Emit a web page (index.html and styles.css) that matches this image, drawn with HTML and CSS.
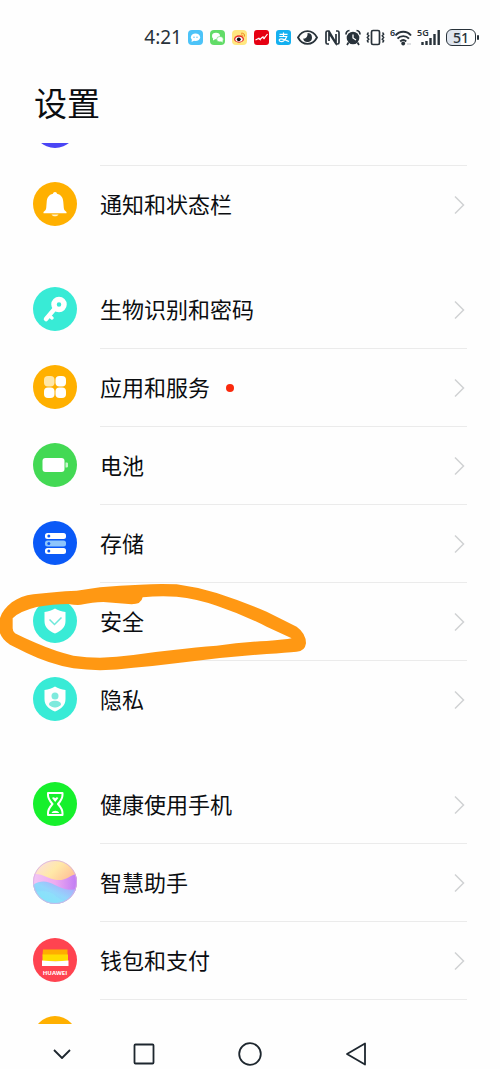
FILE: index.html
```html
<!DOCTYPE html>
<html lang="zh-CN">
<head>
<meta charset="utf-8">
<meta name="viewport" content="width=device-width, initial-scale=1">
<title>设置</title>
<link rel="stylesheet" href="styles.css">
</head>
<body>
<div class="screen">
  <div class="status">
    <time class="clock">4:21</time>
    <div class="apps">
      <svg width="15" height="15" viewBox="0 0 15 15"><rect width="15" height="15" rx="4" fill="#4cc3f8"/><ellipse cx="7.5" cy="7.2" rx="4.6" ry="3.8" fill="#fff"/><path d="M4 9l-.5 3 3-1.4z" fill="#fff"/><circle cx="6" cy="7.2" r=".7" fill="#4cc3f8"/><circle cx="9" cy="7.2" r=".7" fill="#4cc3f8"/></svg>
      <svg width="15" height="15" viewBox="0 0 15 15"><rect width="15" height="15" rx="4" fill="#62dc68"/><ellipse cx="6" cy="6" rx="4" ry="3.3" fill="#fff"/><path d="M3 8v2.500l2.500-1.500z" fill="#fff"/><ellipse cx="10" cy="9.200" rx="3.300" ry="2.700" fill="#fff" stroke="#62dc68" stroke-width=".6"/><path d="M11 11l1.500 1.700V10z" fill="#fff"/></svg>
      <svg width="15" height="15" viewBox="0 0 15 15"><rect width="15" height="15" rx="4" fill="#ffe780"/><ellipse cx="7" cy="9" rx="5" ry="3.700" fill="#e8322c"/><ellipse cx="7" cy="9.300" rx="3.600" ry="2.500" fill="#fff"/><circle cx="6.800" cy="9.300" r="1.900" fill="#111"/><path d="M9.500 3.200c2-.4 3.400 1 3 3M9.500 5c1-.1 1.500.4 1.300 1.300" fill="none" stroke="#f08a24" stroke-linecap="round"/></svg>
      <svg width="15" height="15" viewBox="0 0 15 15"><rect width="15" height="15" rx="3" fill="#e60012"/><path d="M1.500 10l3-1.500 1.500 1 2.500-2.500 1.500 1.500L13.500 4" fill="none" stroke="#fff" stroke-width="1.200"/><path d="M5 7.500l1.500 3M9.500 6l1 3" stroke="#fff" stroke-width=".6"/></svg>
      <svg width="15" height="15" viewBox="0 0 15 15"><rect width="15" height="15" rx="3" fill="#14b0f0"/><path d="M3.500 4.300h8M7.500 2.500V6.500M3.300 6.500h7.400C9.500 9.500 7 12 4.500 11.500c-2-.5-1.700-2.700.5-2.700 2.500 0 4.500 1.700 8 2.700" fill="none" stroke="#fff" stroke-width="1.200"/></svg>
    </div>
    <div class="signals">
      <svg width="23" height="17" viewBox="0 0 23 17"><path d="M1 8.500C5.500 0 15.500 0 20 8.500 15.500 17 5.500 17 1 8.500z" fill="none" stroke="#28323a" stroke-width="1.800"/><path d="M10.500 4a4.500 4.500 0 1 1-4.400 5.500c2 .8 5-1.500 4.400-5.500z" fill="#28323a"/></svg>
      <svg width="15" height="17" viewBox="0 0 15 17"><path d="M4 15H2.500Q1 15 1 13.500v-10Q1 2 2.500 2H4l7 12V5M11 2h1.500Q14 2 14 3.500v10q0 1.500-1.500 1.500H11L4 4v8" fill="none" stroke="#28323a" stroke-width="1.700"/></svg>
      <svg width="16" height="17" viewBox="0 0 16 17"><circle cx="8" cy="9" r="6.300" fill="#28323a"/><path d="M1 5.500A4 4 0 0 1 4.500 1.500M11.500 1.500A4 4 0 0 1 15 5.500M3.500 13.500L2 16M12.500 13.500l1.500 2.500" fill="none" stroke="#28323a" stroke-width="1.700"/><path d="M8 5.500V9l3 2" fill="none" stroke="#fff" stroke-width="1.300"/></svg>
      <svg width="19" height="17" viewBox="0 0 19 17"><rect x="5.500" y="1.500" width="8" height="14" rx="1.500" fill="none" stroke="#28323a" stroke-width="1.700"/><path d="M2.500 3.500l-1.200 1.700 1.500 1.600-1.500 1.700 1.500 1.700-1.500 1.600 1.200 1.700M16.500 3.500l1.200 1.700-1.500 1.600 1.500 1.700-1.500 1.700 1.500 1.600-1.200 1.700" fill="none" stroke="#28323a" stroke-width="1.400"/></svg>
      <svg width="22" height="20" viewBox="0 0 22 20"><text class="tag" x="0" y="9">6</text><path d="M5.500 8.500c4-5 11.500-5 15.500 0M7.500 11.700c3-3.500 8.500-3.500 11.500 0M10.200 14.500c2-2 4-2 6 0" fill="none" stroke="#28323a" stroke-width="1.900"/><circle cx="13.200" cy="16.500" r="1.900" fill="#28323a"/><path d="M17 17h4" stroke="#d2d5d8" stroke-width="1.500"/></svg>
      <svg width="24" height="20" viewBox="0 0 24 20"><text class="tag" x="0" y="9">5G</text><path d="M5.500 18v-3M9.500 18v-4M13.500 18v-7M17.500 18V7M21.700 18V3" stroke="#28323a" stroke-width="2.400"/></svg>
      <div class="battery"><span class="charge">51</span><span class="tip"></span></div>
    </div>
  </div>

  <header class="header"><h1 class="title">设置</h1></header>

  <main class="list">
    <section class="group">
      <div class="row"><svg class="icon" viewBox="0 0 44 44"><circle cx="22" cy="22" r="22" fill="#4a45f5"/></svg></div>
      <a class="row" href="#notifications">
        <svg class="icon" viewBox="0 0 44 44"><circle cx="22" cy="22" r="22" fill="#ffb000"/><path d="M22 10c1.200 0 1.800.8 2 1.700 4.300 1 6 4 6.300 8.300l.5 6c.2 1.800 1 2.700 2.700 4v1.200h-23V30c1.700-1.300 2.500-2.200 2.700-4l.5-6c.3-4.300 2-7.300 6.300-8.300.2-.9.800-1.700 2-1.700z" fill="#fff"/><path d="M18.500 32.500h7c-.8 2.400-6.200 2.400-7 0z" fill="#fff3cf"/></svg>
        <span class="body"><span class="label">通知和状态栏</span><svg class="chevron" viewBox="0 0 12 20"><path d="M2 1.500l8.500 8.500L2 18.500"/></svg></span>
      </a>
    </section>

    <section class="group">
      <a class="row" href="#biometrics">
        <svg class="icon" viewBox="0 0 44 44"><circle cx="22" cy="22" r="22" fill="#38ebd6"/><circle cx="26" cy="17.500" r="5" fill="none" stroke="#fff" stroke-width="5.500"/><path d="M21.500 22L13 32" stroke="#fff" stroke-width="4.500" stroke-linecap="round"/><path d="M16 28.500l3 2.500" stroke="#fff" stroke-width="3.500" stroke-linecap="round"/></svg>
        <span class="body"><span class="label">生物识别和密码</span><svg class="chevron" viewBox="0 0 12 20"><path d="M2 1.500l8.500 8.500L2 18.500"/></svg></span>
      </a>
      <a class="row" href="#apps">
        <svg class="icon" viewBox="0 0 44 44"><circle cx="22" cy="22" r="22" fill="#ffb000"/><rect x="11" y="11" width="10.500" height="10.500" rx="4" fill="#ffe7a8"/><rect x="22.500" y="11" width="10.500" height="10.500" rx="4" fill="#fff"/><rect x="11" y="22.500" width="10.500" height="10.500" rx="4" fill="#fff"/><rect x="22.500" y="22.500" width="10.500" height="10.500" rx="4" fill="#fff"/></svg>
        <span class="body"><span class="label">应用和服务</span><span class="dot"></span><svg class="chevron" viewBox="0 0 12 20"><path d="M2 1.500l8.500 8.500L2 18.500"/></svg></span>
      </a>
      <a class="row" href="#battery">
        <svg class="icon" viewBox="0 0 44 44"><circle cx="22" cy="22" r="22" fill="#43d954"/><rect x="9.500" y="15" width="22" height="14" rx="3" fill="#fff"/><path d="M32.500 19.500c2.500 0 2.500 0 2.500 2.500s0 2.500-2.500 2.500z" fill="#c9f5ce"/></svg>
        <span class="body"><span class="label">电池</span><svg class="chevron" viewBox="0 0 12 20"><path d="M2 1.500l8.500 8.500L2 18.500"/></svg></span>
      </a>
      <a class="row" href="#storage">
        <svg class="icon" viewBox="0 0 44 44"><circle cx="22" cy="22" r="22" fill="#0a59f7"/><rect x="12" y="12" width="21" height="6" rx="2.500" fill="#fff"/><rect x="12" y="19.500" width="21" height="6" rx="2.500" fill="#8ec5fb"/><rect x="12" y="27" width="21" height="6" rx="2.500" fill="#fff"/><circle cx="15.800" cy="15" r="1.500" fill="#0a59f7"/><circle cx="15.800" cy="22.500" r="1.500" fill="#0a59f7"/><circle cx="15.800" cy="30" r="1.500" fill="#0a59f7"/></svg>
        <span class="body"><span class="label">存储</span><svg class="chevron" viewBox="0 0 12 20"><path d="M2 1.500l8.500 8.500L2 18.500"/></svg></span>
      </a>
      <a class="row" href="#security">
        <svg class="icon" viewBox="0 0 44 44"><circle cx="22" cy="22" r="22" fill="#38ebd6"/><path d="M22 9.500c3 2 6.500 3 10.500 3.500v9c0 6-4 10-10.500 12.500C15.500 32 11.500 28 11.500 22v-9c4-.5 7.500-1.500 10.500-3.500z" fill="#fff"/><path d="M16.500 20.500l5 5 7-7" fill="none" stroke="#6fe8da" stroke-width="1.500"/></svg>
        <span class="body"><span class="label">安全</span><svg class="chevron" viewBox="0 0 12 20"><path d="M2 1.500l8.500 8.500L2 18.500"/></svg></span>
        <svg class="marker" viewBox="0 0 960 450"><path fill-rule="evenodd" fill="#ff9813" d="M-4 150C-2 105 40 65 100 58Q160 50 230 47Q265 43 300 37Q360 31 420 29Q480 25 530 28Q590 36 650 54Q730 80 800 110Q850 135 890 155Q918 175 918 205Q915 229 890 230Q860 233 800 237Q670 246 540 263Q470 272 400 278Q350 285 300 286Q260 284 220 280Q150 268 80 234L30 209C5 192-4 175-4 150ZM38 130Q55 110 110 96Q160 87 205 87Q235 93 250 88Q275 82 310 81L395 88Q424 88 428 67Q480 61 530 65Q590 71 650 92Q730 119 800 155L875 190Q855 194 800 198Q720 202 650 212Q590 216 520 225Q460 231 400 240Q350 247 300 248Q260 248 220 242Q170 231 110 205Q70 188 45 175Q38 170 38 160Z"/></svg>
      </a>
      <a class="row" href="#privacy">
        <svg class="icon" viewBox="0 0 44 44"><circle cx="22" cy="22" r="22" fill="#38ebd6"/><path d="M22 9.500c3 2 6.500 3 10.500 3.500v9c0 6-4 10-10.500 12.500C15.500 32 11.500 28 11.500 22v-9c4-.5 7.500-1.500 10.500-3.500z" fill="#fff"/><circle cx="22" cy="19" r="3.500" fill="#7eeadd"/><path d="M16 27.500c0-5 12-5 12 0 0 1.500-4 3-6 3s-6-1.500-6-3z" fill="#7eeadd"/></svg>
        <span class="body"><span class="label">隐私</span><svg class="chevron" viewBox="0 0 12 20"><path d="M2 1.500l8.500 8.500L2 18.500"/></svg></span>
      </a>
    </section>

    <section class="group">
      <a class="row" href="#digital-balance">
        <svg class="icon" viewBox="0 0 44 44"><circle cx="22" cy="22" r="22" fill="#16f02c"/><path d="M15 11h14.500v2c0 4-2 6-4.500 9 2.500 3 4.500 5 4.500 9v2H15v-2c0-4 2-6 4.500-9-2.500-3-4.500-5-4.500-9z" fill="none" stroke="#fff" stroke-width="2" stroke-linejoin="round"/><path d="M19 16c1-1 2.200-.8 3.200.3 1-1.100 2.200-1.300 3.200-.3l-3.200 4zM18.500 31c1.200-3 6.500-3 7.700 0z" fill="#fff"/></svg>
        <span class="body"><span class="label">健康使用手机</span><svg class="chevron" viewBox="0 0 12 20"><path d="M2 1.500l8.500 8.500L2 18.500"/></svg></span>
      </a>
      <a class="row" href="#assistant">
        <svg class="icon" viewBox="0 0 44 44">
          <defs>
            <linearGradient id="sky" x1="0" y1="0" x2="1" y2="1"><stop offset="0" stop-color="#f9dcf0"/><stop offset=".35" stop-color="#ffe9a8"/><stop offset=".6" stop-color="#ffc79a"/></linearGradient>
            <linearGradient id="wave"><stop offset="0" stop-color="#f2c6f4"/><stop offset=".5" stop-color="#eeaaf0"/><stop offset="1" stop-color="#c07cf4"/></linearGradient>
            <linearGradient id="sea" x1="0" y1="1" x2="1" y2="0"><stop offset="0" stop-color="#6fe2f8"/><stop offset=".5" stop-color="#93d6fc"/><stop offset="1" stop-color="#b795fa"/></linearGradient>
            <clipPath id="ball"><circle cx="22" cy="22" r="22"/></clipPath>
          </defs>
          <g clip-path="url(#ball)"><path d="M0 0h44v44H0z" fill="url(#sky)"/><path d="M0 14c10-1 15 5 24 6 9 1 13-5 20-6v30H0z" fill="url(#wave)"/><path d="M0 25c8-5 14-4 22 0 8 4 14 6 22 4v15H0z" fill="url(#sea)"/><path d="M0 33c10-4 18-2 24 4 6 5 12 5 20 2v5H0z" fill="#8eeafa" opacity=".4"/></g><circle cx="22" cy="22" r="21.500" fill="none" stroke="#d5aee6" stroke-width=".8"/>
        </svg>
        <span class="body"><span class="label">智慧助手</span><svg class="chevron" viewBox="0 0 12 20"><path d="M2 1.500l8.500 8.500L2 18.500"/></svg></span>
      </a>
      <a class="row" href="#wallet">
        <svg class="icon" viewBox="0 0 44 44"><circle cx="22" cy="22" r="22" fill="#ff4350"/><path d="M10 11.500h24.500v6H9.500z" fill="#ffad00"/><path d="M9.500 16.500h25.500v7H9.500z" fill="#ffdc00"/><path d="M9 22.500q13.500 1.500 26.500 0V28H9z" fill="#fff"/><text class="brand" x="22" y="37">HUAWEI</text></svg>
        <span class="body"><span class="label">钱包和支付</span><svg class="chevron" viewBox="0 0 12 20"><path d="M2 1.500l8.500 8.500L2 18.500"/></svg></span>
      </a>
      <div class="row"><svg class="icon" viewBox="0 0 44 44"><circle cx="22" cy="22" r="22" fill="#ffb000"/></svg><span class="body"></span></div>
    </section>
  </main>

  <nav class="nav">
    <button class="key key-hide" type="button" aria-label="收起"><svg width="20" height="22" viewBox="0 0 20 22"><path d="M2 7l8 8 8-8"/></svg></button>
    <button class="key" type="button" aria-label="最近任务"><svg width="22" height="22" viewBox="0 0 22 22"><rect x="1.500" y="1.500" width="19" height="19" rx="1"/></svg></button>
    <button class="key" type="button" aria-label="主页"><svg width="24" height="24" viewBox="0 0 24 24"><circle cx="12" cy="12" r="10.800"/></svg></button>
    <button class="key" type="button" aria-label="返回"><svg width="22" height="24" viewBox="0 0 22 24"><path d="M20 1.500v21L2 12z"/></svg></button>
  </nav>
</div>
</body>
</html>
```
FILE: styles.css
```css
* {
  box-sizing: border-box;
}

body {
  margin: 0;
  background: #fefefe;
  color: #0b0d10;
  font-family: "Noto Sans", "Noto Sans CJK SC", sans-serif;
}

svg {
  display: block;
  flex: none;
}

.screen {
  display: flex;
  flex-direction: column;
  height: 100vh;
}

.status {
  display: flex;
  flex: none;
  align-items: center;
  justify-content: flex-end;
  gap: 6px;
  height: 74px;
  padding-right: 21px;
  color: #28323a;
}

.clock {
  font-size: 19px;
  line-height: 24px;
}

.apps {
  display: flex;
  gap: 7px;
}

.signals {
  display: flex;
  align-items: center;
  gap: 5px;
}

.tag {
  font-size: 9px;
  font-weight: 600;
  fill: #28323a;
}

.battery {
  display: flex;
  align-items: center;
  gap: 1px;
}

.charge {
  width: 30px;
  border: 1px solid #28323a;
  border-radius: 6px;
  background: linear-gradient(90deg, #dfe5ee 50%, #fefefe 50%);
  font-size: 14px;
  font-weight: 500;
  line-height: 15px;
  text-align: center;
}

.tip {
  width: 2px;
  height: 5px;
  border-radius: 1px;
  background: #28323a;
}

.header {
  flex: none;
  height: 69px;
  padding: 4px 34px 0;
}

.title {
  margin: 0;
  font-family: "Noto Sans CJK SC", sans-serif;
  font-size: 33px;
  font-weight: 400;
  line-height: 48px;
}

.list {
  flex: 1;
  min-height: 0;
  overflow: hidden;
}

.group {
  margin-bottom: 27px;
}

.group:first-child {
  margin-top: -56px;
}

.row {
  position: relative;
  display: flex;
  align-items: center;
  gap: 23px;
  height: 78px;
  padding: 0 33px;
  color: inherit;
  text-decoration: none;
}

.icon {
  width: 44px;
  height: 44px;
}

.body {
  display: flex;
  flex: 1;
  align-items: center;
  align-self: stretch;
  border-top: 1px solid transparent;
}

.row + .row .body {
  border-top-color: #ebebeb;
}

.label {
  padding-bottom: 4px;
  font-family: "Noto Sans CJK SC", sans-serif;
  font-size: 22px;
  line-height: 32px;
}

.dot {
  width: 8px;
  height: 8px;
  margin-left: 16px;
  border-radius: 50%;
  background: #fa2a0d;
}

.chevron {
  width: 12px;
  height: 20px;
  margin-left: auto;
  margin-right: 2px;
  fill: none;
  stroke: #d0d2d4;
  stroke-width: 1.5;
}

.marker {
  position: absolute;
  top: -7px;
  left: 0;
  width: 320px;
  height: 150px;
  z-index: 1;
  pointer-events: none;
}

.brand {
  font-family: "Open Sans", sans-serif;
  font-size: 6px;
  font-weight: 700;
  text-anchor: middle;
  fill: #fff;
}

.nav {
  display: grid;
  flex: none;
  grid-template-columns: 18fr 21fr 21fr 21fr 18fr;
  align-items: center;
  height: 45px;
  padding-top: 14px;
}

.key {
  display: flex;
  align-items: center;
  justify-content: center;
  padding: 0;
  border: 0;
  background: none;
  fill: none;
  stroke: #1d262e;
  stroke-width: 1.8;
  stroke-linejoin: round;
}

.key-hide {
  padding-left: 34px;
}
```
